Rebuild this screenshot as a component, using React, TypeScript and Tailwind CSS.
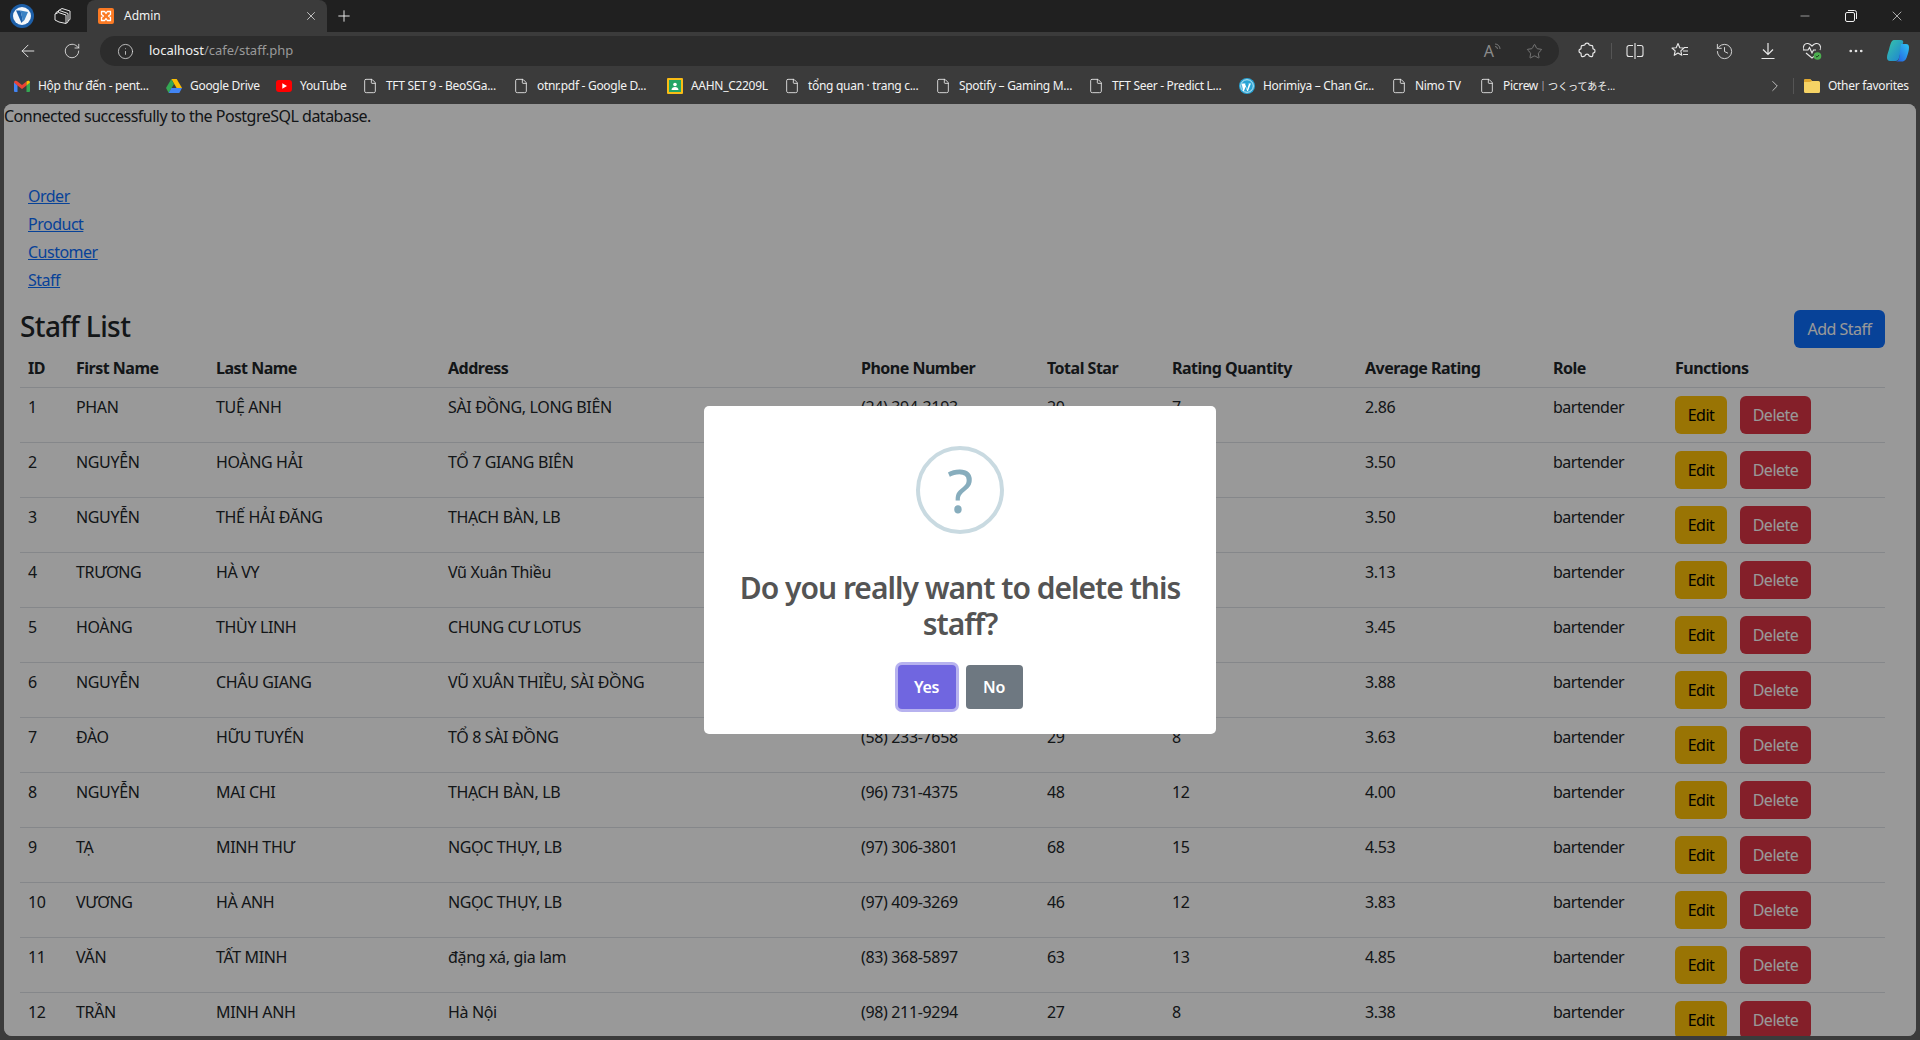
import { ArrowLeft, ChevronRight, Ellipsis, File, History, Info, Minus, Plus, RotateCw, Star, X } from 'lucide-react';

const font = "font-['Noto_Sans','Noto_Sans_CJK_JP',sans-serif]";

const bookmarks = [
  { icon: 'gmail', label: 'Hộp thư đến - pent...', w: 'w-[152px]' },
  { icon: 'drive', label: 'Google Drive', w: 'w-[110px]' },
  { icon: 'youtube', label: 'YouTube', w: 'w-[86px]' },
  { icon: 'doc', label: 'TFT SET 9 - BeoSGa...', w: 'w-[151px]' },
  { icon: 'doc', label: 'otnr.pdf - Google D...', w: 'w-[154px]' },
  { icon: 'classroom', label: 'AAHN_C2209L', w: 'w-[117px]' },
  { icon: 'doc', label: 'tổng quan · trang c...', w: 'w-[151px]' },
  { icon: 'doc', label: 'Spotify – Gaming M...', w: 'w-[153px]' },
  { icon: 'doc', label: 'TFT Seer - Predict L...', w: 'w-[151px]' },
  { icon: 'wp', label: 'Horimiya – Chan Gr...', w: 'w-[152px]' },
  { icon: 'doc', label: 'Nimo TV', w: 'w-[88px]' },
  { icon: 'doc', label: 'Picrew', cjk: '｜つくってあそ...', w: 'w-[130px]' },
];

const staff = [
  ['1', 'PHAN', 'TUỆ ANH', 'SÀI ĐỒNG, LONG BIÊN', '(24) 394-3193', '20', '7', '2.86'],
  ['2', 'NGUYỄN', 'HOÀNG HẢI', 'TỔ 7 GIANG BIÊN', '', '', '', '3.50'],
  ['3', 'NGUYỄN', 'THẾ HẢI ĐĂNG', 'THẠCH BÀN, LB', '', '', '', '3.50'],
  ['4', 'TRƯƠNG', 'HÀ VY', 'Vũ Xuân Thiều', '', '', '', '3.13'],
  ['5', 'HOÀNG', 'THÙY LINH', 'CHUNG CƯ LOTUS', '', '', '', '3.45'],
  ['6', 'NGUYỄN', 'CHÂU GIANG', 'VŨ XUÂN THIỀU, SÀI ĐỒNG', '', '', '', '3.88'],
  ['7', 'ĐÀO', 'HỮU TUYẾN', 'TỔ 8 SÀI ĐỒNG', '(58) 233-7658', '29', '8', '3.63'],
  ['8', 'NGUYỄN', 'MAI CHI', 'THẠCH BÀN, LB', '(96) 731-4375', '48', '12', '4.00'],
  ['9', 'TẠ', 'MINH THƯ', 'NGỌC THỤY, LB', '(97) 306-3801', '68', '15', '4.53'],
  ['10', 'VƯƠNG', 'HÀ ANH', 'NGỌC THỤY, LB', '(97) 409-3269', '46', '12', '3.83'],
  ['11', 'VĂN', 'TẤT MINH', 'đặng xá, gia lam', '(83) 368-5897', '63', '13', '4.85'],
  ['12', 'TRẦN', 'MINH ANH', 'Hà Nội', '(98) 211-9294', '27', '8', '3.38'],
];

const columns = [
  { name: 'ID', w: 'w-[48px]' },
  { name: 'First Name', w: 'w-[140px]' },
  { name: 'Last Name', w: 'w-[232px]' },
  { name: 'Address', w: 'w-[413px]' },
  { name: 'Phone Number', w: 'w-[186px]' },
  { name: 'Total Star', w: 'w-[125px]' },
  { name: 'Rating Quantity', w: 'w-[193px]' },
  { name: 'Average Rating', w: 'w-[188px]' },
  { name: 'Role', w: 'w-[122px]' },
  { name: 'Functions', w: 'w-[218px]' },
];

function BookmarkIcon({ type }: { type: string }) {
  if (type === 'gmail') {
    return (
      <svg viewBox="0 0 16 12" className="h-[12px] w-[16px] shrink-0">
        <path d="M0 2v9a1 1 0 0 0 1 1h2.500V5z" fill="#4285f4" />
        <path d="M16 2v9a1 1 0 0 1-1 1h-2.500V5z" fill="#34a853" />
        <path d="M12.500 1.500 8 5 3.500 1.500C2 .3 0 .8 0 2.500L3.500 5.500 8 9l4.500-3.500V1.500z" fill="#ea4335" />
        <path d="M12.500 1.500C14 .3 16 .8 16 2.500l-3.500 3z" fill="#fbbc04" />
      </svg>
    );
  }
  if (type === 'drive') {
    return (
      <svg viewBox="0 0 16 14" className="h-[14px] w-[16px] shrink-0">
        <path d="M5.300 0h5.400l5.300 9h-5.400z" fill="#fbbc04" />
        <path d="M5.300 0 0 9l2.700 5 5.300-9z" fill="#34a853" />
        <path d="M2.700 14h10.600L16 9H5.400z" fill="#4285f4" />
      </svg>
    );
  }
  if (type === 'youtube') {
    return (
      <svg viewBox="0 0 16 12" className="h-[12px] w-[16px] shrink-0">
        <rect width="16" height="12" rx="3" fill="#ff0000" />
        <path d="M6.300 3.300 11 6l-4.700 2.700z" fill="#fff" />
      </svg>
    );
  }
  if (type === 'classroom') {
    return (
      <svg viewBox="0 0 16 16" className="h-[16px] w-[16px] shrink-0">
        <rect width="16" height="16" rx="1" fill="#f9bc15" />
        <rect x="2" y="2" width="12" height="12" fill="#23a566" />
        <circle cx="8" cy="6.500" r="1.800" fill="#fff" />
        <path d="M4.500 12c0-2 1.600-3 3.500-3s3.500 1 3.500 3z" fill="#fff" />
      </svg>
    );
  }
  if (type === 'wp') {
    return (
      <svg viewBox="0 0 16 16" className="h-[16px] w-[16px] shrink-0">
        <circle cx="8" cy="8" r="8" fill="#2aa4d5" />
        <circle cx="8" cy="8" r="6.300" fill="none" stroke="#fff" strokeWidth=".7" />
        <path d="M3.600 5.500h3l-.5.500 2 5.500 1.800-5.500-.6-.5h3l-.6.500-2.700 7h-.8L6.600 8.800 5 13h-.8L2.700 6z" fill="#fff" />
      </svg>
    );
  }
  return <File size={16} strokeWidth={1.25} className="shrink-0 text-[#f2f2f2]" />;
}

function ExtensionsIcon() {
  return (
    <svg viewBox="0 0 20 20" fill="none" stroke="#e8e8e8" strokeWidth="1.200" className="h-[20px] w-[20px]" strokeLinejoin="round">
      <path d="M8 3.800C8 1.500 12 1.500 12 3.800c0 .7 2.500.4 3.300.8.900.5.400 2.600.7 3.200.4.800 2-.3 2 2.200s-1.600 1.400-2 2.200c-.3.600.2 2.700-.7 3.200-.8.400-2.500 0-3-.3-.5-.400-.1-2-2.300-2s-1.800 1.600-2.300 2c-.5.300-2.200.7-3 .3-.9-.5-.4-2.600-.7-3.200-.4-.8-2 .3-2-2.200s1.600-1.400 2-2.200c.3-.6-.2-2.700.7-3.200.8-.4 3.300-.100 3.300-.8z" />
    </svg>
  );
}

function FavStarIcon() {
  return (
    <svg viewBox="0 0 20 20" fill="none" stroke="#e8e8e8" strokeWidth="1.100" className="h-[20px] w-[20px]">
      <path d="m8 2.500 1.800 4.200 4.200.3-3.200 2.900 1 4.400L8 12l-3.800 2.300 1-4.400L2 7l4.200-.3z" strokeLinejoin="round" />
      <path d="M14 6.500h4M13 10h5M13 13.500h5" />
    </svg>
  );
}

function DownloadIcon() {
  return (
    <svg viewBox="0 0 18 18" fill="none" stroke="#e8e8e8" strokeWidth="1.200" className="h-[18px] w-[18px]">
      <path d="M9 1v11M4 7.500 9 12.500l5-5M2.500 16.500h13" />
    </svg>
  );
}

function HealthIcon() {
  return (
    <svg viewBox="0 0 22 22" fill="none" className="h-[22px] w-[22px]">
      <path d="M3 10C1 6 4 3 7 3.500c1.800.3 3 1.500 4 2.500 1-1 2.200-2.200 4-2.500 3-.5 6 2.500 4 6.500" stroke="#e8e8e8" strokeWidth="1.100" />
      <path d="M2 10h5l1.500-2.500L11 13l1.500-3H15" stroke="#e8e8e8" strokeWidth="1.100" />
      <path d="M5 13l6 5 2-1.700" stroke="#e8e8e8" strokeWidth="1.100" />
      <circle cx="16.500" cy="16" r="3.800" fill="#4caf50" />
      <path d="m14.800 16 1.200 1.200 2-2.200" stroke="#1d3b1e" strokeWidth="1" />
    </svg>
  );
}

function CopilotIcon() {
  return (
    <svg viewBox="0 0 24 24" className="h-[24px] w-[24px]">
      <defs>
        <linearGradient id="copilotA" x1="0" y1="0" x2="1" y2="1">
          <stop offset="0" stopColor="#37c6a8" />
          <stop offset="1" stopColor="#1c7fd6" />
        </linearGradient>
        <linearGradient id="copilotB" x1="1" y1="0" x2="0" y2="1">
          <stop offset="0" stopColor="#2fc4f2" />
          <stop offset="1" stopColor="#2358e0" />
        </linearGradient>
      </defs>
      <path d="M8 1h7c1.500 0 2 .7 2.300 2L13 19c-.5 1.800-1.600 3-3.500 3H4c-2 0-3-1.300-3-3.500 0-2.500 1-5 2-8C4 7 5 1 8 1z" fill="url(#copilotA)" />
      <path d="M15 5h5c2 0 3 1 3 3.500 0 3-1 6-2 9-.8 2.500-2 5-5 5H9.500c1.900 0 3-1.200 3.500-3z" fill="url(#copilotB)" />
    </svg>
  );
}

function BrowserChrome() {
  return (
    <div className="shrink-0 bg-[#3b3b3b]">
      {/* Tabs */}
      <div className="flex h-[32px] items-center bg-[#202020]">
        <div className="flex w-[44px] justify-center">
          <svg viewBox="0 0 24 24" className="h-[24px] w-[24px]">
            <circle cx="12" cy="12" r="12" fill="#1d5fa8" />
            <circle cx="12" cy="12" r="9" fill="#f4f7fb" />
            <path d="M6 6.500h4.500L13 17l-1.500 2z" fill="#1d5fa8" />
            <path d="M10.500 6.500 18 8l-3.500 8-1.500 1.500z" fill="#3b82c4" />
          </svg>
        </div>
        <div className="mr-[6px] flex w-[37px] justify-center">
          <svg viewBox="0 0 18 18" fill="none" stroke="#e6e6e6" strokeWidth="1" className="h-[18px] w-[18px]">
            <path d="M4.500 5V3.500L8 1.500l8 2.500v8.500l-2 1.200" />
            <path d="M2 7V5.500L5.500 3.500l8.500 3v8.500l-2 1.200" />
            <path d="M1 7l3.500-1.500L12 8v8.500l-7-1.500-4-2z" />
          </svg>
        </div>
        <div className="flex h-[32px] w-[240px] items-center rounded-t-lg bg-[#3b3b3b] pl-[11px] pr-[9px]">
          <svg viewBox="0 0 16 16" className="h-[16px] w-[16px] shrink-0">
            <rect width="16" height="16" rx="2" fill="#fb7a24" />
            <path d="M3.500 3.500h3.200L8 5.500l1.300-2h3.200v3L10.500 8l2 1.500v3H9.300L8 10.500l-1.300 2H3.500v-3L5.500 8l-2-1.500z" fill="none" stroke="#fff" strokeWidth="1.300" strokeLinejoin="round" />
          </svg>
          <span className={`ml-[10px] flex-1 text-[12px] text-[#f2f2f2] ${font}`}>Admin</span>
          <X size={14} strokeWidth={1.25} className="text-[#f0f0f0]" />
        </div>
        <div className="flex w-[34px] justify-center">
          <Plus size={18} strokeWidth={1.25} className="text-[#f0f0f0]" />
        </div>
        <div className="ml-auto flex items-center">
          <div className="flex w-[46px] justify-center"><Minus size={14} strokeWidth={1} className="text-[#f0f0f0]" /></div>
          <div className="flex w-[46px] justify-center">
            <svg viewBox="0 0 12 12" fill="none" stroke="#f0f0f0" strokeWidth="1" className="h-[12px] w-[12px]">
              <rect x=".5" y="2.500" width="9" height="9" rx="1.500" />
              <path d="M3 .5h6.500a2 2 0 0 1 2 2V9" />
            </svg>
          </div>
          <div className="flex w-[46px] justify-center"><X size={16} strokeWidth={1} className="text-[#f0f0f0]" /></div>
        </div>
      </div>
      {/* Toolbar */}
      <div className="flex h-[34px] items-end">
        <div className="flex w-[100px] shrink-0 items-center pb-[5px]">
          <div className="flex w-[56px] justify-center"><ArrowLeft size={20} strokeWidth={1.1} className="text-[#ececec]" /></div>
          <div className="flex w-[32px] justify-center"><RotateCw size={18} strokeWidth={1.1} className="text-[#ececec]" /></div>
        </div>
        <div className="flex h-[30px] w-[1459px] shrink-0 items-center self-end rounded-full bg-[#2c2c2c] pl-[17px] pr-[16px]">
          <Info size={17} strokeWidth={1.1} className="text-[#e0e0e0]" />
          <span className={`ml-[15px] flex-1 text-[13px] ${font}`}>
            <span className="text-[#f0f0f0]">localhost</span>
            <span className="text-[#9a9a9a]">/cafe/staff.php</span>
          </span>
          <span className="mr-[24px] flex items-start text-[16px] leading-none text-[#8a8a8a]">
            A
            <svg viewBox="0 0 8 8" fill="none" stroke="#8a8a8a" strokeWidth=".8" className="h-[8px] w-[8px]">
              <path d="M1 1a5 5 0 0 1 5 5M1 3.500A2.500 2.500 0 0 1 3.500 6" />
            </svg>
          </span>
          <Star size={17} strokeWidth={1.1} className="text-[#8a8a8a]" />
        </div>
        <div className="flex flex-1 items-center self-center pt-[4px] text-[#e8e8e8]">
          <div className="flex w-[52px] justify-center pl-[4px]"><ExtensionsIcon /></div>
          <div className="h-[16px] w-px bg-[#555]" />
          <div className="flex w-[46px] justify-center">
            <svg viewBox="0 0 18 18" fill="none" stroke="#e8e8e8" strokeWidth="1.100" className="h-[18px] w-[18px]">
              <path d="M7 3.500H3a2 2 0 0 0-2 2v7a2 2 0 0 0 2 2h4M11 3.500h4a2 2 0 0 1 2 2v7a2 2 0 0 1-2 2h-4M9 1v16" />
            </svg>
          </div>
          <div className="flex w-[44px] justify-center"><FavStarIcon /></div>
          <div className="flex w-[44px] justify-center"><History size={19} strokeWidth={1.1} /></div>
          <div className="flex w-[44px] justify-center"><DownloadIcon /></div>
          <div className="flex w-[44px] justify-center"><HealthIcon /></div>
          <div className="flex w-[44px] justify-center"><Ellipsis size={18} strokeWidth={1.6} /></div>
          <div className="flex w-[40px] justify-center"><CopilotIcon /></div>
        </div>
      </div>
      {/* Favorites bar */}
      <div className={`flex h-[38px] items-center pl-[14px] pt-[1px] text-[12px] text-[#f2f2f2] ${font}`}>
        {bookmarks.map((b) => (
          <div key={b.label} className={`flex shrink-0 items-center gap-[8px] ${b.w}`}>
            <BookmarkIcon type={b.icon} />
            <span className="whitespace-nowrap tracking-[-0.3px]">
              {b.label}
              {b.cjk && <span className="text-[10px] tracking-normal">{b.cjk}</span>}
            </span>
          </div>
        ))}
        <ChevronRight size={18} strokeWidth={1.1} className="ml-[157px] shrink-0 text-[#d8d8d8]" />
        <div className="ml-[9px] h-[16px] w-px shrink-0 bg-[#555]" />
        <svg viewBox="0 0 16 14" className="ml-[10px] h-[14px] w-[16px] shrink-0">
          <path d="M0 1.500A1.500 1.500 0 0 1 1.500 0H6l2 2h6.500A1.500 1.500 0 0 1 16 3.500v9a1.500 1.500 0 0 1-1.500 1.500h-13A1.500 1.500 0 0 1 0 12.500z" fill="#f6d365" />
          <path d="M0 3h6l2-1-2-2H1.500A1.500 1.500 0 0 0 0 1.500z" fill="#e0a72e" />
        </svg>
        <span className="ml-[8px] whitespace-nowrap tracking-[-0.3px]">Other favorites</span>
      </div>
    </div>
  );
}

function ConfirmDialog() {
  return (
    <div className={`absolute inset-0 flex items-start justify-center bg-black/40 pt-[302px] ${font}`}>
      <div className="flex h-[328px] w-[512px] flex-col items-center rounded-[5px] bg-white pt-[40px]">
        <div className="flex h-[88px] w-[88px] items-center justify-center rounded-full border-[4px] border-[#c9dae1] text-[60px] leading-none text-[#87adbd]">
          ?
        </div>
        <h2 className="mt-[36px] px-[20px] text-center text-[30px] leading-[36px] font-semibold tracking-[-1px] text-[#545454]">
          Do you really want to delete this staff?
        </h2>
        <div className="mt-[23px] flex items-center gap-[10px]">
          <button className="h-[44px] w-[58px] rounded-[4px] bg-[#7066e0] text-[16px] font-semibold tracking-[-0.3px] text-white ring-[3px] ring-[#7066e0]/50">
            Yes
          </button>
          <button className="h-[44px] w-[57px] rounded-[4px] bg-[#6e7881] text-[16px] font-semibold tracking-[-0.3px] text-white">
            No
          </button>
        </div>
      </div>
    </div>
  );
}

export default function App() {
  return (
    <div className="flex h-[1040px] w-[1920px] flex-col overflow-hidden bg-[#3b3b3b]">
      <BrowserChrome />
      <main className={`relative mx-[4px] h-[932px] shrink-0 overflow-hidden rounded-lg bg-white text-[16px] leading-[24px] tracking-[-0.5px] text-[#212529] ${font}`}>
        <div>Connected successfully to the PostgreSQL database.</div>
        <ul className="mt-[56px] flex flex-col gap-[4px] pl-[24px]">
          {['Order', 'Product', 'Customer', 'Staff'].map((link) => (
            <li key={link}>
              <a href="#" className="text-[#0d6efd] underline">{link}</a>
            </li>
          ))}
        </ul>
        <section className="mt-[18px] pl-[16px] pr-[31px]">
          <div className="flex items-start justify-between">
            <h2 className="text-[28px] leading-[32px] font-medium tracking-[-0.6px]">Staff List</h2>
            <button className="h-[38px] w-[91px] rounded-md bg-[#0d6efd] text-white">Add Staff</button>
          </div>
          <table className="w-full table-fixed border-collapse">
            <thead>
              <tr className="border-b border-[#dee2e6]">
                {columns.map((c) => (
                  <th key={c.name} className={`h-[39px] px-[8px] pt-[2px] text-left font-bold ${c.w}`}>{c.name}</th>
                ))}
              </tr>
            </thead>
            <tbody>
              {staff.map((row) => (
                <tr key={row[0]} className="border-b border-[#dee2e6]">
                  {row.map((cell, i) => (
                    <td key={i} className="px-[8px] pb-[9px] pt-[7px] align-top tracking-[-0.35px]">{cell}</td>
                  ))}
                  <td className="px-[8px] pb-[9px] pt-[7px] align-top">bartender</td>
                  <td className="px-[8px] py-[8px] align-top">
                    <div className="flex gap-[13px]">
                      <button className="h-[38px] w-[52px] rounded-md bg-[#ffc107] text-black">Edit</button>
                      <button className="h-[38px] w-[71px] rounded-md bg-[#dc3545] text-white">Delete</button>
                    </div>
                  </td>
                </tr>
              ))}
            </tbody>
          </table>
        </section>
        <ConfirmDialog />
      </main>
    </div>
  );
}
